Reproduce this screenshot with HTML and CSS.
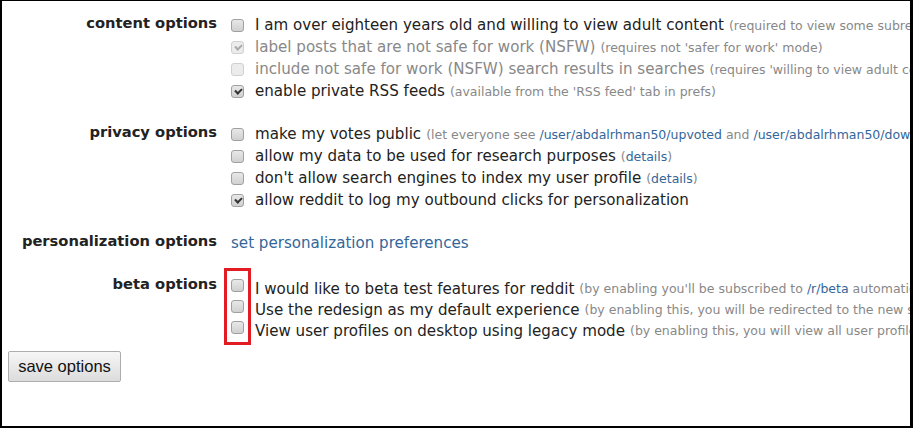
FILE: index.html
```html
<!DOCTYPE html>
<html lang="en">
<head>
  <meta charset="UTF-8" />
  <title>preferences</title>
  <link rel="stylesheet" href="styles.css">
</head>
<body>
  <div class="frame">
    <form class="prefs" onsubmit="return false">
      <div class="pref-group">
        <div class="pref-label">content options</div>
        <div class="pref-list">
          <label class="pref-row"><input type="checkbox"> I am over eighteen years old and willing to view adult content <span class="note">(required to view some subreddits)</span></label>
          <label class="pref-row off"><input type="checkbox" checked disabled> label posts that are not safe for work (NSFW) <span class="note">(requires not 'safer for work' mode)</span></label>
          <label class="pref-row off"><input type="checkbox" disabled> include not safe for work (NSFW) search results in searches <span class="note">(requires 'willing to view adult content')</span></label>
          <label class="pref-row"><input type="checkbox" checked> enable private RSS feeds <span class="note">(available from the 'RSS feed' tab in prefs)</span></label>
        </div>
      </div>

      <div class="pref-group">
        <div class="pref-label">privacy options</div>
        <div class="pref-list">
          <label class="pref-row"><input type="checkbox"> make my votes public <span class="note">(let everyone see <a href="#">/user/abdalrhman50/upvoted</a> and <a href="#">/user/abdalrhman50/downvoted</a>)</span></label>
          <label class="pref-row"><input type="checkbox"> allow my data to be used for research purposes <span class="note">(<a href="#">details</a>)</span></label>
          <label class="pref-row"><input type="checkbox"> don't allow search engines to index my user profile <span class="note">(<a href="#">details</a>)</span></label>
          <label class="pref-row"><input type="checkbox" checked> allow reddit to log my outbound clicks for personalization</label>
        </div>
      </div>

      <div class="pref-group">
        <div class="pref-label">personalization options</div>
        <div class="pref-list">
          <div class="pref-row"><a href="#">set personalization preferences</a></div>
        </div>
      </div>

      <div class="pref-group beta">
        <div class="pref-label">beta options</div>
        <div class="pref-list">
          <div class="highlight"></div>
          <label class="pref-row"><input type="checkbox"> I would like to beta test features for reddit <span class="note">(by enabling you'll be subscribed to <a href="#">/r/beta</a> automatically)</span></label>
          <label class="pref-row"><input type="checkbox"> Use the redesign as my default experience <span class="note">(by enabling this, you will be redirected to the new site)</span></label>
          <label class="pref-row"><input type="checkbox"> View user profiles on desktop using legacy mode <span class="note">(by enabling this, you will view all user profiles in legacy mode)</span></label>
        </div>
      </div>

      <button type="submit" class="save">save options</button>
    </form>
  </div>
</body>
</html>
```

FILE: styles.css
```css
html, body {
  margin: 0;
  background: white;
}
.frame {
  width: 908px;
  height: 425px;
  border-style: solid;
  border-color: #000;
  border-width: 1px 3px 2px 2px;
  overflow: hidden;
  font-family: "DejaVu Sans", Verdana, sans-serif;
  color: #222;
}
.prefs {
  padding-top: 13px;
}
.pref-group {
  display: grid;
  grid-template-columns: 215px 1fr;
  column-gap: 14px;
  margin-bottom: 21px;
}
.pref-label {
  text-align: right;
  font-weight: bold;
  font-size: 14.7px;
  line-height: 18px;
  white-space: nowrap;
}
.pref-list {
  position: relative;
}
.pref-row {
  display: flex;
  align-items: center;
  height: 22px;
  white-space: nowrap;
  font-size: 15.1px;
}
.pref-row input {
  flex: none;
  margin: 0 11px 0 0;
}
.pref-row.off {
  color: #888;
}
.note {
  font-size: 12.5px;
  color: #888;
  margin-left: 5px;
}
a {
  color: #369;
  text-decoration: none;
}
input[type="checkbox"] {
  appearance: none;
  position: relative;
  width: 13px;
  height: 13px;
  border: 1px solid #a0a0a0;
  border-radius: 3px;
  background: linear-gradient(#e8e8e8, #d0d0d0);
}
input[type="checkbox"]:checked::after {
  content: "";
  position: absolute;
  left: 3px;
  top: 2px;
  width: 5px;
  height: 3px;
  border-left: 2px solid #333;
  border-bottom: 2px solid #333;
  transform: rotate(-45deg);
}
input[type="checkbox"]:disabled {
  border-color: #d0d0d0;
  background: #ececec;
}
input[type="checkbox"]:disabled::after {
  border-color: #aaa;
}
.pref-group.beta {
  margin-top: 24px;
  margin-bottom: 10px;
}
.beta .pref-label {
  margin-top: -3px;
}
.beta .pref-row {
  height: 21px;
}
.beta .pref-row input {
  margin-bottom: 6px;
}
.highlight {
  position: absolute;
  left: -7px;
  top: -10px;
  width: 21px;
  height: 71px;
  border: 3px solid #e31b23;
}
.save {
  margin: 0 0 0 6px;
  width: 113px;
  height: 31px;
  font-family: "Liberation Sans", Arial, sans-serif;
  font-size: 16.5px;
  color: #111;
  border: 1px solid #adadad;
  border-radius: 2px;
  background: linear-gradient(#f6f6f6, #dcdcdc);
  padding: 0;
}
```
